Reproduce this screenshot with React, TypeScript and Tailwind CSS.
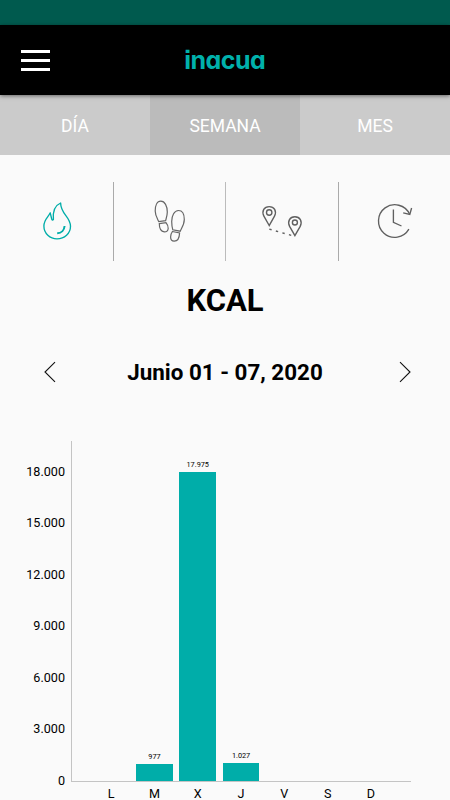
import clsx from "clsx";

const TEAL = "#00ada9";

const tabs = [
  { label: "DÍA", active: false },
  { label: "SEMANA", active: true },
  { label: "MES", active: false },
];

const ticks = ["18.000", "15.000", "12.000", "9.000", "6.000", "3.000", "0"];

const days = [
  { day: "L", value: 0, label: "" },
  { day: "M", value: 977, label: "977" },
  { day: "X", value: 17975, label: "17.975" },
  { day: "J", value: 1027, label: "1.027" },
  { day: "V", value: 0, label: "" },
  { day: "S", value: 0, label: "" },
  { day: "D", value: 0, label: "" },
];

// height in px of one kcal on the chart
const SCALE = 51.6 / 3000;

const FlameIcon = () => (
  <svg width="100" height="95" viewBox="0 0 100 95" fill="none" stroke={TEAL}>
    <path
      d="M35.6 28C31 30 27.5 34.5 28.4 44.5C27.5 45.5 26.7 44.8 26.6 43.5L25.2 37.8C23.5 42 18.9 44.5 18.9 51C18.9 58.5 25 63.9 32 63.9C39.5 63.9 45.5 58.5 45.5 51.3C45.5 41.5 35.8 39.5 35.6 28Z"
      strokeWidth="1.35"
      strokeLinejoin="round"
    />
    <path d="M39.6 51C39.2 55 36.5 58.2 32.2 58.3" strokeWidth="2" />
  </svg>
);

const StepsIcon = () => (
  <svg width="100" height="95" viewBox="0 0 100 95" fill="none" stroke="#666" strokeWidth="1.2">
    <path d="M20.8 26.2C24.8 26.2 27.3 31 27.3 37C27.3 40.5 26.4 42.7 25.6 45.6L18.7 46.6C17.2 43.6 15.2 40.5 15.2 36C15.2 30.5 17 26.2 20.8 26.2Z" />
    <path d="M19.3 48.6L26 47.6C27.6 49.5 28.3 51.5 28.2 53.5C28 55.8 26.4 56.9 24.3 56.9C21.4 56.7 19.3 53.5 19.3 48.6Z" />
    <path d="M38.5 35.5C42.3 35.5 44.3 39 44.3 44.5C44.3 49.5 41.6 53 40.2 56.2L32.8 54.8C32 52 31.7 49.5 31.7 46.5C31.7 40.5 34.4 35.5 38.5 35.5Z" />
    <path d="M32.4 56.5L39.6 57.9C39.4 62.5 37.8 66.2 34.2 66.2C31.7 66.2 30.6 64.4 30.6 62C30.6 60 31.3 58 32.4 56.5Z" />
  </svg>
);

const RouteIcon = () => (
  <svg width="100" height="95" viewBox="0 0 100 95" fill="none" stroke="#606060" strokeWidth="1.4">
    <path d="M19.2 50.5L13.9 41.2C11.4 36 14.2 31.6 19.2 31.6C24.2 31.6 27 36 24.5 41.2Z" />
    <circle cx="19.2" cy="37.5" r="2.7" />
    <path d="M44.9 60.7L39.6 51.4C37.1 46.2 39.9 41.8 44.9 41.8C49.9 41.8 52.7 46.2 50.2 51.4Z" />
    <circle cx="44.9" cy="47.5" r="2.5" />
    <path d="M19.3 54.1L43.5 61" strokeDasharray="2.4 4.4" strokeWidth="1.4" />
  </svg>
);

const HistoryIcon = () => (
  <svg width="100" height="95" viewBox="0 0 100 95" fill="none" stroke="#606060" strokeWidth="1.35">
    <path d="M78.9 54.2A16.3 16.3 0 1 1 79.6 39.2" />
    <path d="M73.2 37.9L79.8 39.5L81.6 33" />
    <path d="M63.4 34.5V47.3L71.5 51" />
  </svg>
);

const Chevron = ({ flip }: { flip?: boolean }) => (
  <svg
    className={clsx("-mt-[2px] h-[22px] w-3", flip && "-scale-x-100")}
    viewBox="0 0 12 22"
    fill="none"
    stroke="#111"
    strokeWidth="1.1"
  >
    <path d="M11 1.2L1 11L11 20.8" />
  </svg>
);

const Header = () => (
  <>
    <div className="h-[25px] bg-[#005a4e]" />
    <header className="relative z-10 flex h-[70px] items-center bg-black shadow-[0_1px_4px_rgba(0,0,0,0.5)]">
      <button className="ml-[21px] mt-[1px] flex w-[28.5px] flex-col gap-[5.4px]">
        <span className="h-[3.4px] bg-white" />
        <span className="h-[3.4px] bg-white" />
        <span className="h-[3.4px] bg-white" />
      </button>
      <h1 className="ml-[134.7px] text-[25px] leading-none font-bold tracking-[-0.5px] text-[#00b1ab] [font-family:Inter,sans-serif] [font-feature-settings:'cv11','ss07']">
        inacua
      </h1>
    </header>
  </>
);

const Tabs = () => (
  <nav className="flex h-[60px]">
    {tabs.map(({ label, active }) => (
      <button
        key={label}
        className={clsx(
          "flex-1 pt-[2px] text-[17.5px] text-white",
          active ? "bg-[#bbbbbb]" : "bg-[#cbcbcb]"
        )}
      >
        {label}
      </button>
    ))}
  </nav>
);

const Metrics = () => (
  <div className="mt-5 flex h-[95px]">
    <div className="w-[25px]" />
    <FlameIcon />
    <div className="-ml-3 h-[79px] w-px mt-[7px] bg-[#aaa]" />
    <div className="-mr-px w-[27px]" />
    <StepsIcon />
    <div className="-ml-[15px] mt-[7px] h-[79px] w-px bg-[#bbb]" />
    <div className="w-6" />
    <RouteIcon />
    <div className="-ml-3 mt-[7px] h-[79px] w-px bg-[#aaa]" />
    <div className="-ml-[9px]" />
    <HistoryIcon />
  </div>
);

const Chart = () => (
  <div className="mt-[54px] flex">
    <div className="mt-[20.5px] flex w-[65px] flex-col text-right text-[12.6px]">
      {ticks.map((tick) => (
        <span key={tick} className="h-[51.6px] leading-[20px]">
          {tick}
        </span>
      ))}
    </div>
    <div className="ml-[6px] w-[340px]">
      <div className="flex h-[341px] items-end border-b border-l border-[#c4c4c4] pl-[17.5px]">
        {days.map(({ day, value, label }) => (
          <div key={day} className="flex w-[43.3px] flex-col items-center">
            <span className="mb-[3px] text-[7.3px] leading-[9px]">{label}</span>
            <div
              className="w-[36.5px] bg-[#00ada9]"
              style={{ height: value * SCALE }}
            />
          </div>
        ))}
      </div>
      <div className="flex pl-[18.5px] text-center text-[12.6px] leading-[18px]">
        {days.map(({ day }) => (
          <span key={day} className="mt-[3px] w-[43.3px]">
            {day}
          </span>
        ))}
      </div>
    </div>
  </div>
);

const App = () => {
  return (
    <div className="h-[800px] w-[450px] overflow-hidden bg-[#fafafa] text-black [font-family:Roboto,sans-serif]">
      <Header />
      <Tabs />
      <Metrics />
      <h2 className="mt-[11px] text-center text-[31px] leading-10 font-bold">KCAL</h2>
      <div className="mt-[37px] flex h-[29px] items-center justify-between pr-[39px] pl-[44px]">
        <Chevron />
        <p className="-ml-[5px] text-[22.4px] font-bold">Junio 01 - 07, 2020</p>
        <Chevron flip />
      </div>
      <Chart />
    </div>
  );
};

export default App;
